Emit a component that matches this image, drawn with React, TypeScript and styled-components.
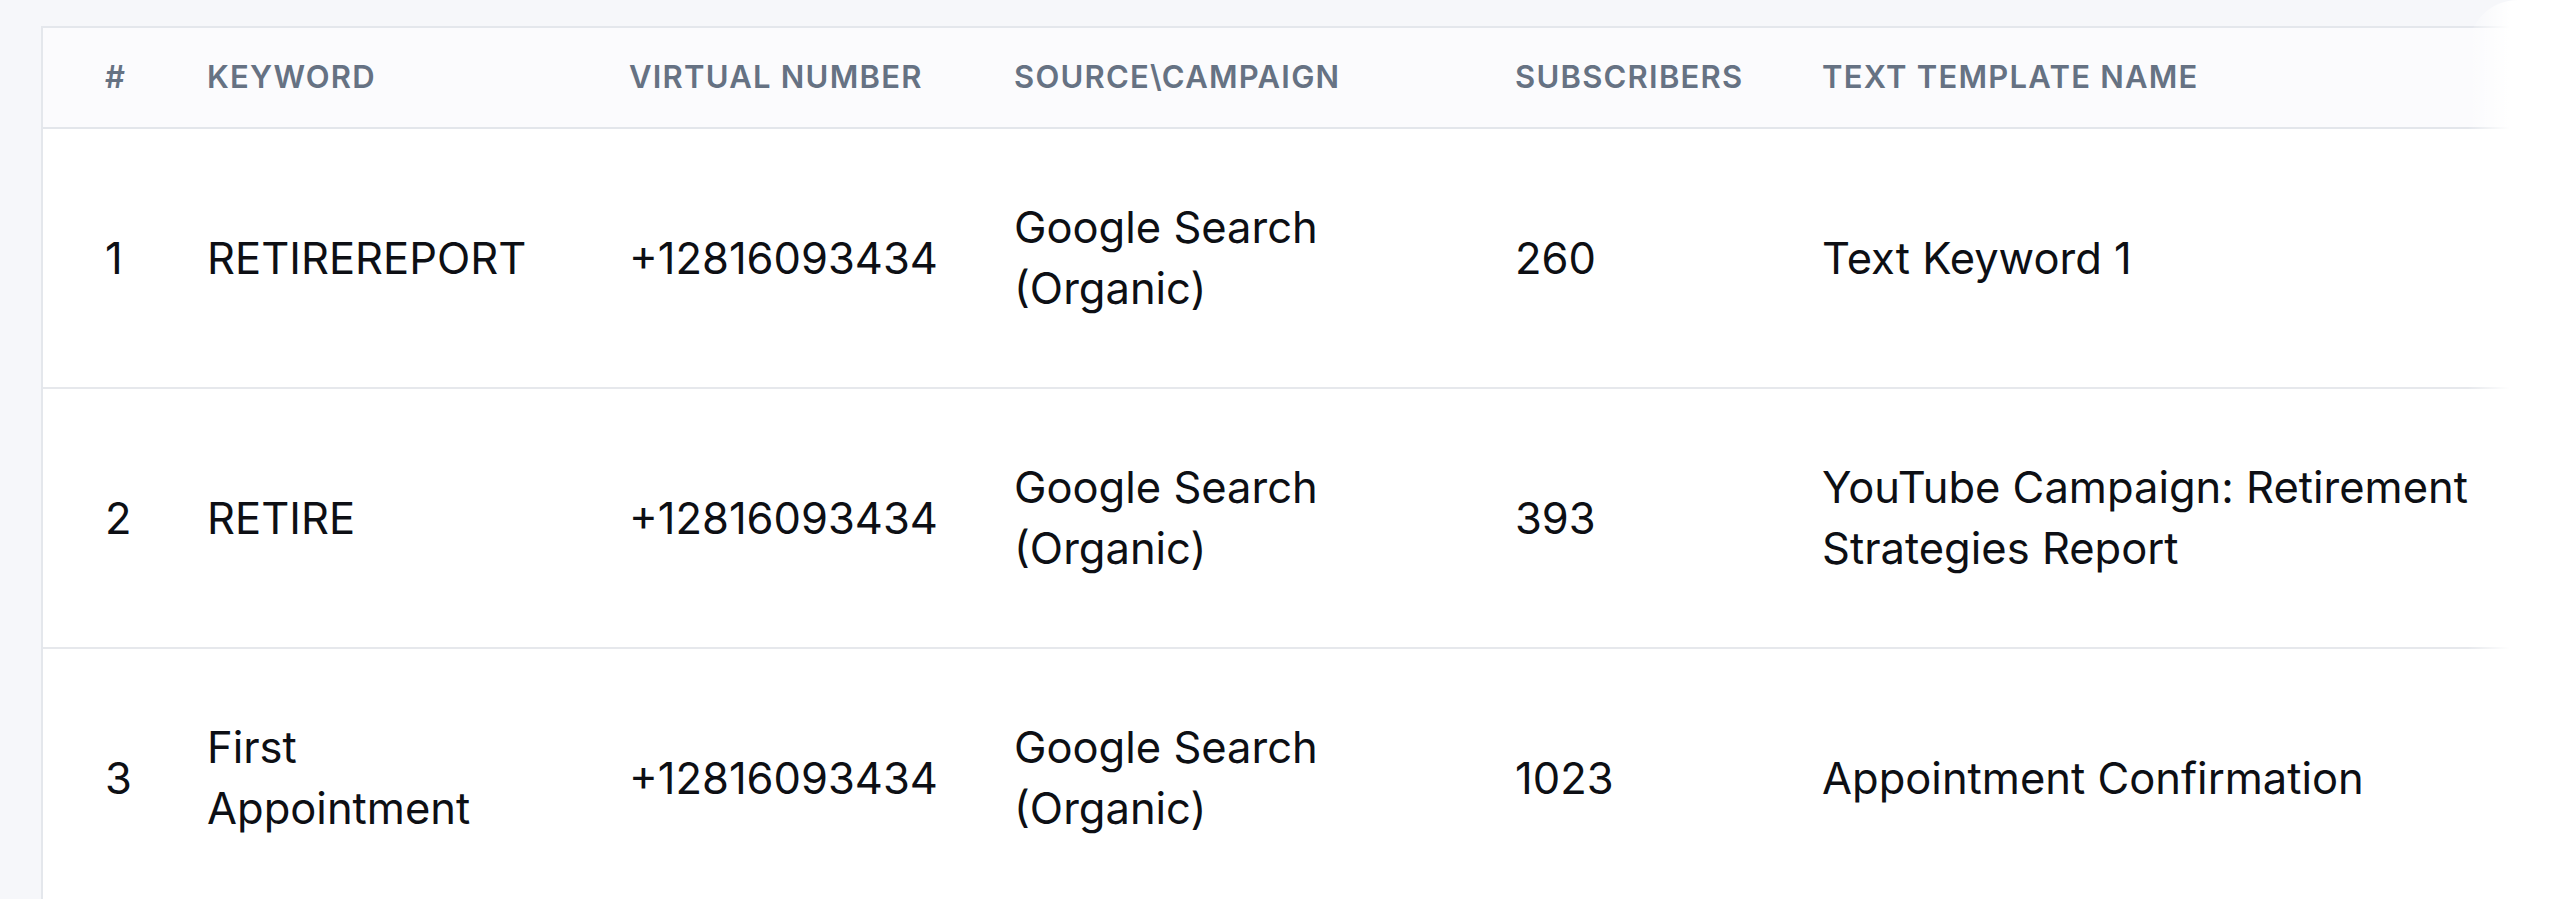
import React from 'react';
import styled, { createGlobalStyle } from 'styled-components';

const GlobalStyle = createGlobalStyle`
  html, body {
    margin: 0;
    padding: 0;
    background: #f6f7fa;
    overflow: hidden;
    font-family: Inter, "Noto Sans", "Liberation Sans", sans-serif;
  }
`

const COLUMNS = '102px 422px 385px 501px 307px 760px';

const Page = styled.div`
  position: relative;
  height: 100vh;
  padding: 26px 0 0 41px;
  box-sizing: border-box;
`

const Card = styled.div`
  background: #ffffff;
  border-top: 2px solid #e4e7ec;
  border-left: 2px solid #e4e7ec;
  overflow: hidden;
  height: 100%;
`

const HeaderRow = styled.div`
  display: grid;
  grid-template-columns: ${COLUMNS};
  align-items: center;
  padding-left: 62px;
  padding-bottom: 2px;
  height: 97px;
  background: #fbfbfd;
  border-bottom: 2px solid #e3e6eb;
`

const HeadCell = styled.div`
  font-size: 31px;
  font-weight: 600;
  letter-spacing: 0.04em;
  text-transform: uppercase;
  color: #667283;
  white-space: nowrap;
`

const Row = styled.div`
  display: grid;
  grid-template-columns: ${COLUMNS};
  align-items: center;
  padding-left: 62px;
  height: 258px;
  border-bottom: 2px solid #e6e8ec;
`

const Cell = styled.div<{ $pad?: number }>`
  font-size: 43.5px;
  line-height: 61px;
  color: #0d0f14;
  padding-right: ${(p) => p.$pad ?? 30}px;
`

// scroll shadow on the right edge of the table
const Fade = styled.div`
  position: absolute;
  top: 0;
  right: 0;
  bottom: 0;
  width: 92px;
  border-top-left-radius: 50px;
  background: linear-gradient(to right, rgba(255, 255, 255, 0), #ffffff 45%);
  pointer-events: none;
`

type Keyword = {
  id: number,
  keyword: string,
  number: string,
  source: string,
  subscribers: number,
  template: string,
}

const rows: Keyword[] = [
  { id: 1, keyword: 'RETIREREPORT', number: '+12816093434', source: 'Google Search (Organic)', subscribers: 260, template: 'Text Keyword 1' },
  { id: 2, keyword: 'RETIRE', number: '+12816093434', source: 'Google Search (Organic)', subscribers: 393, template: 'YouTube Campaign: Retirement Strategies Report' },
  { id: 3, keyword: 'First Appointment', number: '+12816093434', source: 'Google Search (Organic)', subscribers: 1023, template: 'Appointment Confirmation' },
]

const headers = ['#', 'Keyword', 'Virtual Number', 'Source\\Campaign', 'Subscribers', 'Text Template Name']

export default function App() {
  return (
    <>
      <GlobalStyle />
      <Page>
        <Card>
          <HeaderRow>
            {headers.map((h) => <HeadCell key={h}>{h}</HeadCell>)}
          </HeaderRow>
          {rows.map((r) => (
            <Row key={r.id}>
              <Cell>{r.id}</Cell>
              <Cell $pad={70}>{r.keyword}</Cell>
              <Cell>{r.number}</Cell>
              <Cell $pad={130}>{r.source}</Cell>
              <Cell>{r.subscribers}</Cell>
              <Cell $pad={40}>{r.template}</Cell>
            </Row>
          ))}
        </Card>
        <Fade />
      </Page>
    </>
  )
}
